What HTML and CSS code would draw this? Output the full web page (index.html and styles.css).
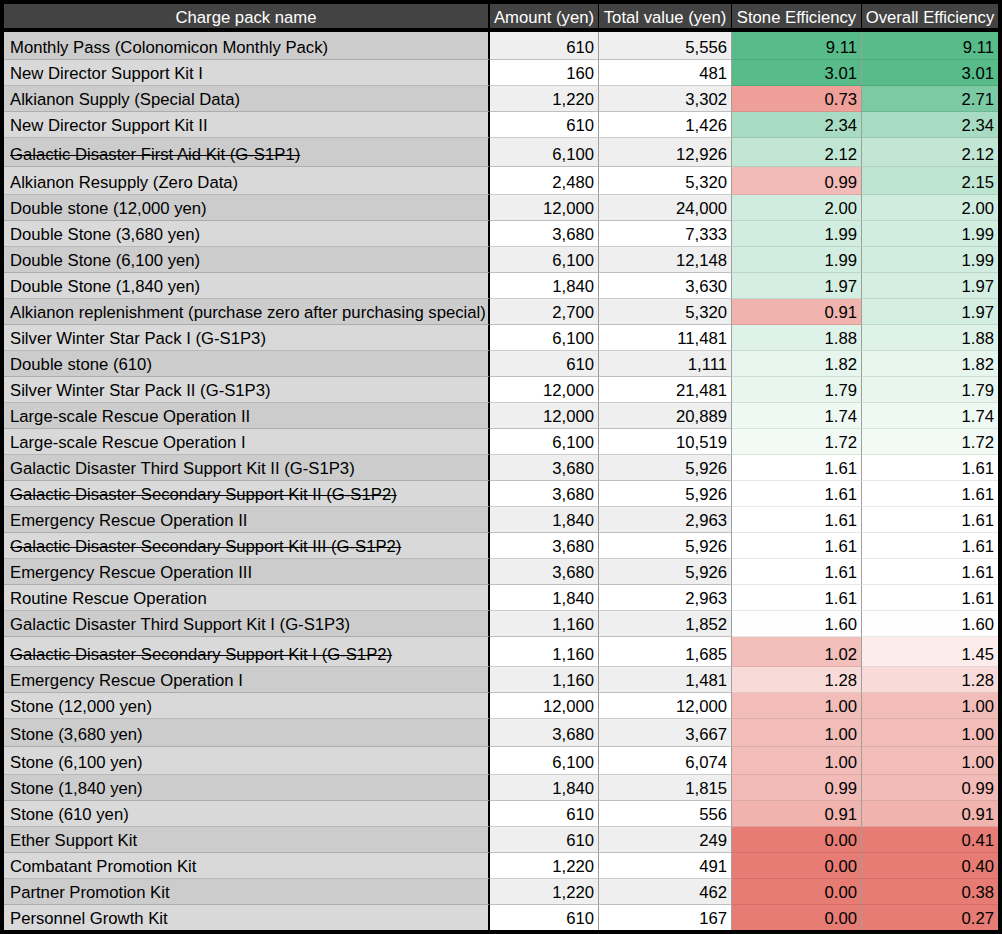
FILE: index.html
```html
<!DOCTYPE html>
<html lang="en">
<head>
<meta charset="utf-8">
<title>Charge packs</title>
<link rel="stylesheet" href="styles.css">
</head>
<body>
<div class="sheet">
  <div class="row head">
    <div class="cell name">Charge pack name</div>
    <div class="cell">Amount (yen)</div>
    <div class="cell">Total value (yen)</div>
    <div class="cell">Stone Efficiency</div>
    <div class="cell">Overall Efficiency</div>
  </div>
  <div class="row odd h27"><div class="cell name">Monthly Pass (Colonomicon Monthly Pack)</div><div class="cell num">610</div><div class="cell num">5,556</div><div class="cell num c" style="background:#57bb8a">9.11</div><div class="cell num c" style="background:#57bb8a">9.11</div></div>
  <div class="row"><div class="cell name">New Director Support Kit I</div><div class="cell num">160</div><div class="cell num">481</div><div class="cell num c" style="background:#57bb8a">3.01</div><div class="cell num c" style="background:#57bb8a">3.01</div></div>
  <div class="row odd"><div class="cell name">Alkianon Supply (Special Data)</div><div class="cell num">1,220</div><div class="cell num">3,302</div><div class="cell num c" style="background:#ed9f98">0.73</div><div class="cell num c" style="background:#7bcaa3">2.71</div></div>
  <div class="row"><div class="cell name">New Director Support Kit II</div><div class="cell num">610</div><div class="cell num">1,426</div><div class="cell num c" style="background:#a7dcc2">2.34</div><div class="cell num c" style="background:#a7dcc2">2.34</div></div>
  <div class="row odd h28"><div class="cell name"><s>Galactic Disaster First Aid Kit (G-S1P1)</s></div><div class="cell num">6,100</div><div class="cell num">12,926</div><div class="cell num c" style="background:#c2e6d4">2.12</div><div class="cell num c" style="background:#c2e6d4">2.12</div></div>
  <div class="row h27"><div class="cell name">Alkianon Resupply (Zero Data)</div><div class="cell num">2,480</div><div class="cell num">5,320</div><div class="cell num c" style="background:#f2bbb7">0.99</div><div class="cell num c" style="background:#bee5d2">2.15</div></div>
  <div class="row odd"><div class="cell name">Double stone (12,000 yen)</div><div class="cell num">12,000</div><div class="cell num">24,000</div><div class="cell num c" style="background:#d0ecde">2.00</div><div class="cell num c" style="background:#d0ecde">2.00</div></div>
  <div class="row"><div class="cell name">Double Stone (3,680 yen)</div><div class="cell num">3,680</div><div class="cell num">7,333</div><div class="cell num c" style="background:#d1eddf">1.99</div><div class="cell num c" style="background:#d1eddf">1.99</div></div>
  <div class="row odd"><div class="cell name">Double Stone (6,100 yen)</div><div class="cell num">6,100</div><div class="cell num">12,148</div><div class="cell num c" style="background:#d1eddf">1.99</div><div class="cell num c" style="background:#d1eddf">1.99</div></div>
  <div class="row"><div class="cell name">Double Stone (1,840 yen)</div><div class="cell num">1,840</div><div class="cell num">3,630</div><div class="cell num c" style="background:#d4eee1">1.97</div><div class="cell num c" style="background:#d4eee1">1.97</div></div>
  <div class="row odd"><div class="cell name">Alkianon replenishment (purchase zero after purchasing special)</div><div class="cell num">2,700</div><div class="cell num">5,320</div><div class="cell num c" style="background:#f0b3ad">0.91</div><div class="cell num c" style="background:#d4eee1">1.97</div></div>
  <div class="row"><div class="cell name">Silver Winter Star Pack I (G-S1P3)</div><div class="cell num">6,100</div><div class="cell num">11,481</div><div class="cell num c" style="background:#dff2e8">1.88</div><div class="cell num c" style="background:#dff2e8">1.88</div></div>
  <div class="row odd"><div class="cell name">Double stone (610)</div><div class="cell num">610</div><div class="cell num">1,111</div><div class="cell num c" style="background:#e6f5ed">1.82</div><div class="cell num c" style="background:#e6f5ed">1.82</div></div>
  <div class="row"><div class="cell name">Silver Winter Star Pack II (G-S1P3)</div><div class="cell num">12,000</div><div class="cell num">21,481</div><div class="cell num c" style="background:#e9f6f0">1.79</div><div class="cell num c" style="background:#e9f6f0">1.79</div></div>
  <div class="row odd"><div class="cell name">Large-scale Rescue Operation II</div><div class="cell num">12,000</div><div class="cell num">20,889</div><div class="cell num c" style="background:#eff9f4">1.74</div><div class="cell num c" style="background:#eff9f4">1.74</div></div>
  <div class="row"><div class="cell name">Large-scale Rescue Operation I</div><div class="cell num">6,100</div><div class="cell num">10,519</div><div class="cell num c" style="background:#f2faf6">1.72</div><div class="cell num c" style="background:#f2faf6">1.72</div></div>
  <div class="row odd"><div class="cell name">Galactic Disaster Third Support Kit II (G-S1P3)</div><div class="cell num">3,680</div><div class="cell num">5,926</div><div class="cell num c" style="background:#ffffff">1.61</div><div class="cell num c" style="background:#ffffff">1.61</div></div>
  <div class="row"><div class="cell name"><s>Galactic Disaster Secondary Support Kit II (G-S1P2)</s></div><div class="cell num">3,680</div><div class="cell num">5,926</div><div class="cell num c" style="background:#ffffff">1.61</div><div class="cell num c" style="background:#ffffff">1.61</div></div>
  <div class="row odd"><div class="cell name">Emergency Rescue Operation II</div><div class="cell num">1,840</div><div class="cell num">2,963</div><div class="cell num c" style="background:#ffffff">1.61</div><div class="cell num c" style="background:#ffffff">1.61</div></div>
  <div class="row"><div class="cell name"><s>Galactic Disaster Secondary Support Kit III (G-S1P2)</s></div><div class="cell num">3,680</div><div class="cell num">5,926</div><div class="cell num c" style="background:#ffffff">1.61</div><div class="cell num c" style="background:#ffffff">1.61</div></div>
  <div class="row odd"><div class="cell name">Emergency Rescue Operation III</div><div class="cell num">3,680</div><div class="cell num">5,926</div><div class="cell num c" style="background:#ffffff">1.61</div><div class="cell num c" style="background:#ffffff">1.61</div></div>
  <div class="row"><div class="cell name">Routine Rescue Operation</div><div class="cell num">1,840</div><div class="cell num">2,963</div><div class="cell num c" style="background:#ffffff">1.61</div><div class="cell num c" style="background:#ffffff">1.61</div></div>
  <div class="row odd"><div class="cell name">Galactic Disaster Third Support Kit I (G-S1P3)</div><div class="cell num">1,160</div><div class="cell num">1,852</div><div class="cell num c" style="background:#fffefe">1.60</div><div class="cell num c" style="background:#fffefe">1.60</div></div>
  <div class="row h29"><div class="cell name"><s>Galactic Disaster Secondary Support Kit I (G-S1P2)</s></div><div class="cell num">1,160</div><div class="cell num">1,685</div><div class="cell num c" style="background:#f3bfba">1.02</div><div class="cell num c" style="background:#fcedec">1.45</div></div>
  <div class="row odd"><div class="cell name">Emergency Rescue Operation I</div><div class="cell num">1,160</div><div class="cell num">1,481</div><div class="cell num c" style="background:#f8dbd9">1.28</div><div class="cell num c" style="background:#f8dbd9">1.28</div></div>
  <div class="row"><div class="cell name">Stone (12,000 yen)</div><div class="cell num">12,000</div><div class="cell num">12,000</div><div class="cell num c" style="background:#f2bcb8">1.00</div><div class="cell num c" style="background:#f2bcb8">1.00</div></div>
  <div class="row odd h27"><div class="cell name">Stone (3,680 yen)</div><div class="cell num">3,680</div><div class="cell num">3,667</div><div class="cell num c" style="background:#f2bcb8">1.00</div><div class="cell num c" style="background:#f2bcb8">1.00</div></div>
  <div class="row h27"><div class="cell name">Stone (6,100 yen)</div><div class="cell num">6,100</div><div class="cell num">6,074</div><div class="cell num c" style="background:#f2bcb8">1.00</div><div class="cell num c" style="background:#f2bcb8">1.00</div></div>
  <div class="row odd"><div class="cell name">Stone (1,840 yen)</div><div class="cell num">1,840</div><div class="cell num">1,815</div><div class="cell num c" style="background:#f2bbb7">0.99</div><div class="cell num c" style="background:#f2bbb7">0.99</div></div>
  <div class="row"><div class="cell name">Stone (610 yen)</div><div class="cell num">610</div><div class="cell num">556</div><div class="cell num c" style="background:#f0b3ad">0.91</div><div class="cell num c" style="background:#f0b3ad">0.91</div></div>
  <div class="row odd"><div class="cell name">Ether Support Kit</div><div class="cell num">610</div><div class="cell num">249</div><div class="cell num c" style="background:#e67c73">0.00</div><div class="cell num c" style="background:#e67c73">0.41</div></div>
  <div class="row"><div class="cell name">Combatant Promotion Kit</div><div class="cell num">1,220</div><div class="cell num">491</div><div class="cell num c" style="background:#e67c73">0.00</div><div class="cell num c" style="background:#e67c73">0.40</div></div>
  <div class="row odd"><div class="cell name">Partner Promotion Kit</div><div class="cell num">1,220</div><div class="cell num">462</div><div class="cell num c" style="background:#e67c73">0.00</div><div class="cell num c" style="background:#e67c73">0.38</div></div>
  <div class="row last"><div class="cell name">Personnel Growth Kit</div><div class="cell num">610</div><div class="cell num">167</div><div class="cell num c" style="background:#e67c73">0.00</div><div class="cell num c" style="background:#e67c73">0.27</div></div>
</div>
</body>
</html>
```
FILE: styles.css
```css
html, body {
  margin: 0;
  padding: 0;
  background: #000;
}

.sheet {
  box-sizing: border-box;
  width: 1002px;
  height: 934px;
  border: 4px solid #000;
  background: #000;
  font-family: "Liberation Sans", Arial, sans-serif;
  font-size: 16.7px;
  line-height: 19px;
  color: #000;
  overflow: hidden;
}

.row {
  display: grid;
  grid-template-columns: 486px 109px 133px 130px 136px;
  height: 26px;
}

.row.h27 { height: 28px; }
.row.h28 { height: 29px; }
.row.h29 { height: 30px; }
.row.last { height: 25px; }

.cell {
  box-sizing: border-box;
  display: flex;
  align-items: flex-end;
  padding: 0 4px 2px 6px;
  white-space: nowrap;
  overflow: hidden;
  background: #ffffff;
  border-right: 1px solid #9e9e9e;
  border-bottom: 1px solid rgba(0, 0, 0, 0.2);
}

.row.odd .cell { background: #efefef; }

.cell.name {
  background: #d9d9d9;
  border-right: 2px solid #000;
  border-bottom-color: rgba(0, 0, 0, 0.15);
}

.row.odd .cell.name { background: #cccccc; }

.cell:last-child { border-right: none; }

.cell.num { justify-content: flex-end; }

.cell.c { border-bottom-color: rgba(0, 0, 0, 0.09); }

.row.last .cell { border-bottom: none; }

.cell s {
  text-decoration: line-through;
  text-decoration-thickness: 1px;
}

.row.head {
  height: 28px;
}

.row.head .cell {
  background: #434343;
  color: #ffffff;
  justify-content: center;
  padding: 0 2px 1px 2px;
  border-right: 1px solid #000;
  border-bottom: 4px solid #000;
}

.row.head .cell.name { border-right: 2px solid #000; }
.row.head .cell:last-child { border-right: none; }
```
